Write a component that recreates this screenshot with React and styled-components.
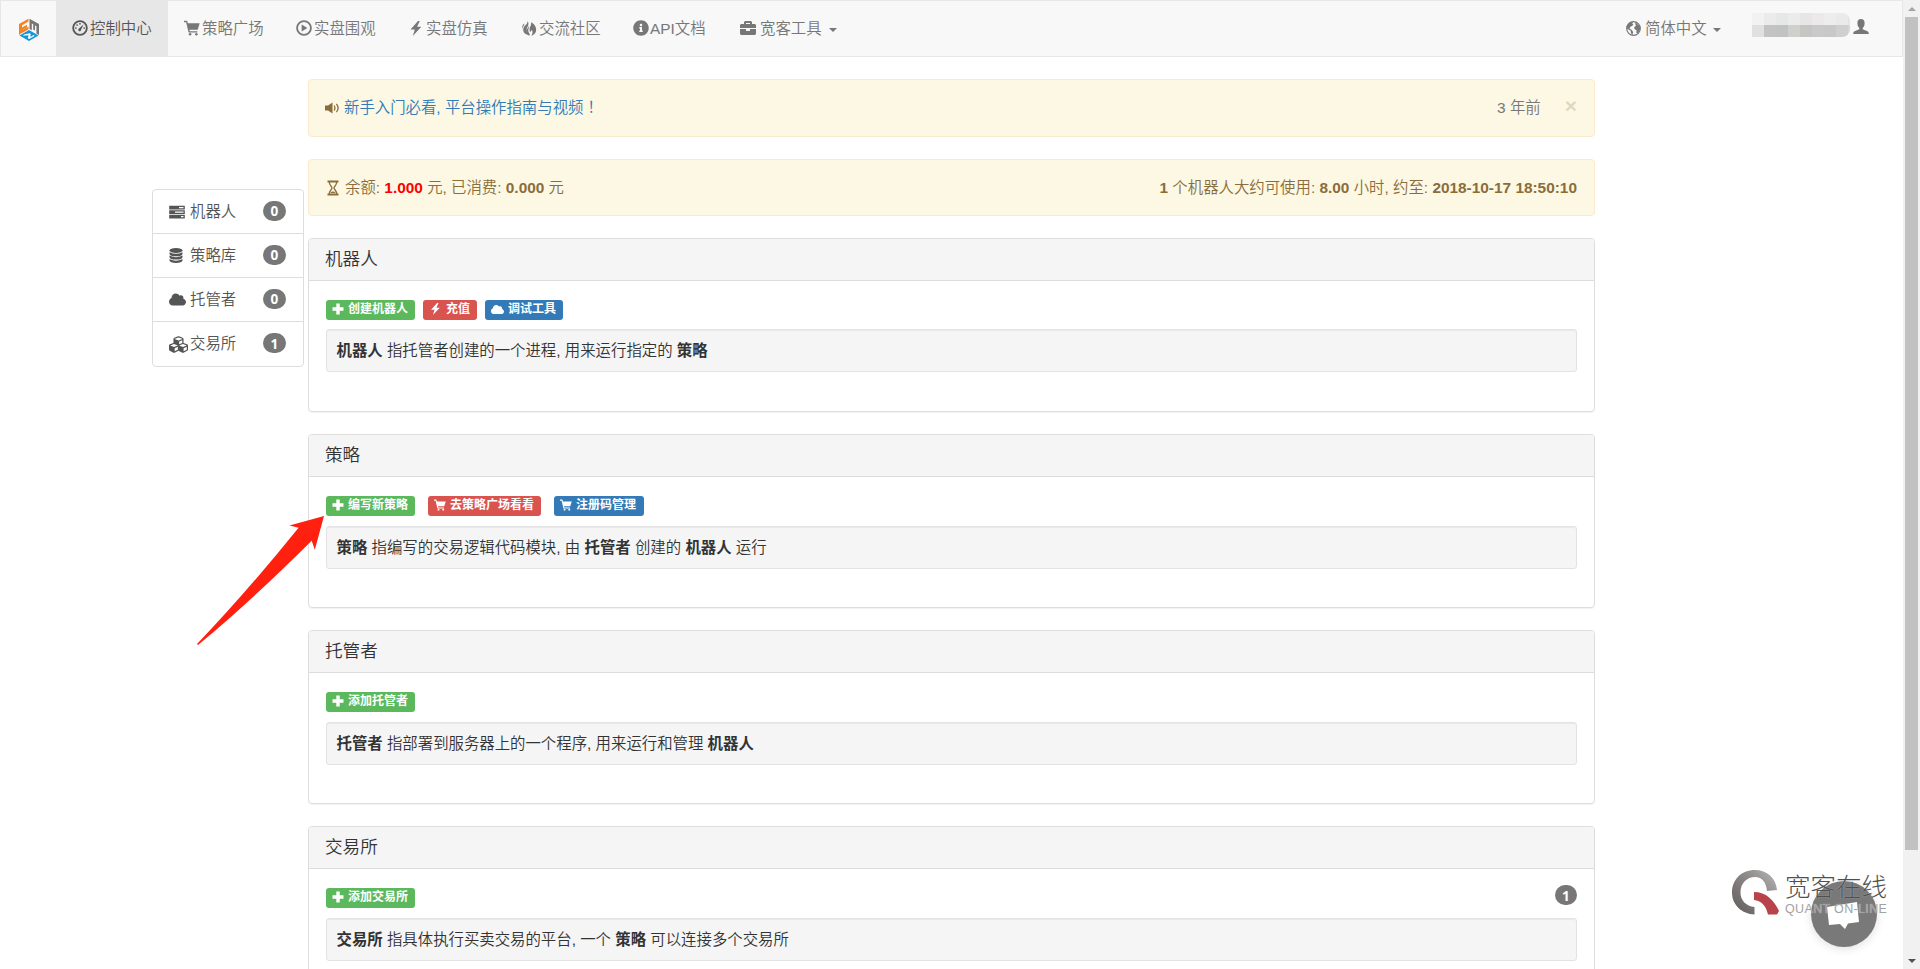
import styled, { createGlobalStyle } from 'styled-components';
import { FaInfoCircle, FaCubes, FaCloud, FaBriefcase } from 'react-icons/fa';

const GlobalStyle = createGlobalStyle`
  * { box-sizing: border-box; }

  body {
    margin: 0;
    height: 969px;
    overflow: hidden;
    background: #fff;
    color: #333;
    font-family: 'Liberation Sans', 'Noto Sans CJK SC', sans-serif;
    font-size: 15.4px;
    font-weight: 350;
    line-height: 22px;
  }

  b { font-weight: 700; }

  svg { display: block; flex: none; fill: currentColor; }
`;

const Screen = styled.div`
  display: grid;
  grid-template-columns: 1903px 17px;
  height: 969px;
  overflow: hidden;
`;

const Page = styled.div`
  height: 969px;
  overflow: hidden;
`;

const Navbar = styled.nav`
  display: flex;
  height: 57px;
  padding-right: 33px;
  background: #f8f8f8;
  border: 1px solid #e7e7e7;
`;

const Brand = styled.a`
  display: flex;
  width: 55px;
  padding: 17px 0 0 17px;
`;

const NavItem = styled.a`
  display: flex;
  align-items: center;
  gap: ${({ $gap }) => $gap || 0}px;
  width: ${({ $width }) => $width}px;
  padding: 0 0 1px 16px;
  white-space: nowrap;
  color: ${({ $active }) => ($active ? '#555' : '#777')};
  background: ${({ $active }) => ($active ? '#e7e7e7' : 'transparent')};
`;

const NavLabel = styled.span`
  padding-top: 2px;
`;

const Caret = styled.span`
  margin: 3px 0 0 ${({ $left }) => $left || 0}px;
  border-top: 4px solid currentColor;
  border-left: 4px solid transparent;
  border-right: 4px solid transparent;
`;

const NavRight = styled.div`
  display: flex;
  margin-left: auto;
  color: #777;
`;

const Account = styled.div`
  display: flex;
  gap: 3px;
  padding-top: 12px;

  svg { margin-top: 6px; }
`;

const Mosaic = styled.div`
  display: grid;
  grid-template-columns: repeat(8, 12px) 2px;
  grid-template-rows: 12px 12px;
  width: 98px;
  height: 24px;
  border-radius: 0 8px 8px 0;
  overflow: hidden;
`;

const Tile = styled.i`
  background: ${({ $tone }) => $tone};
`;

const Layout = styled.div`
  display: grid;
  grid-template-columns: 152px 1287px;
  column-gap: 4px;
  padding: 22px 0 0 152px;
`;

const SideMenu = styled.div`
  margin-top: 110px;
  height: 178px;
  border: 1px solid #ddd;
  border-radius: 4px;
`;

const SideItem = styled.a`
  display: grid;
  grid-template-columns: 21px 1fr 23px;
  align-items: center;
  height: 44px;
  padding: 0 17px 0 16px;
  color: #555;
  white-space: nowrap;

  &:first-child { height: 43px; }
  &:last-child { height: 45px; }
  & + & { border-top: 1px solid #ddd; }
`;

const Badge = styled.span`
  display: flex;
  align-items: center;
  justify-content: center;
  width: ${({ $width }) => $width || 23}px;
  height: 20px;
  margin-bottom: 2px;
  border-radius: 11px;
  background: #777;
  color: #fff;
  font-family: 'Noto Sans', sans-serif;
  font-size: 13.6px;
  font-weight: 700;
  line-height: 13px;
`;

const Main = styled.main`
  display: flex;
  flex-direction: column;
  gap: 22px;
`;

const Alert = styled.div`
  display: flex;
  align-items: center;
  height: ${({ $height }) => $height}px;
  padding: 0 17px 0 16px;
  border: 1px solid #faebcc;
  border-radius: 4px;
  background: #fcf8e3;
  color: #8a6d3b;
  white-space: pre;

  a { margin-left: 4px; color: #337ab7; }
  em { font-style: normal; color: #f00; font-weight: 700; }
`;

const Mark = styled.span`
  font-family: 'Noto Sans CJK TC', sans-serif;
  line-height: 1;
`;

const Balance = styled.span`
  margin-left: 5px;
`;

const Push = styled.span`
  margin-left: auto;
  color: ${({ $muted }) => ($muted ? '#777' : 'inherit')};
`;

const Close = styled.span`
  margin: -5px 0 0 24px;
  color: #e0dabd;
  font-size: 21px;
  font-weight: 700;
`;

const Panel = styled.section`
  height: 174px;
  border: 1px solid #ddd;
  border-radius: 4px;
  box-shadow: 0 1px 1px rgba(0, 0, 0, 0.05);
`;

const PanelHeading = styled.h3`
  margin: 0;
  height: 42px;
  padding: 9px 16px 0;
  border-bottom: 1px solid #ddd;
  border-radius: 3px 3px 0 0;
  background: #f5f5f5;
  font-size: 17.6px;
  font-weight: 350;
  line-height: 22px;
`;

const PanelBody = styled.div`
  padding: 19px 17px 0;
`;

const Actions = styled.div`
  display: flex;
  gap: ${({ $gap }) => $gap}px;
  height: 20px;
`;

const tones = { green: '#5cb85c', red: '#d9534f', blue: '#337ab7' };

const Action = styled.a`
  display: flex;
  align-items: center;
  gap: 4px;
  width: ${({ $width }) => $width}px;
  height: 20px;
  padding: 0 0 2px 6px;
  border-radius: 3px;
  background: ${({ $tone }) => tones[$tone]};
  color: #fff;
  font-size: 12px;
  font-weight: 700;
  line-height: 12px;
  white-space: nowrap;
`;

const Count = styled.div`
  margin-left: auto;
  margin-top: -3px;
`;

const Well = styled.p`
  margin: ${({ $top }) => $top || 10}px 0 0;
  height: 43px;
  padding: 10px 9.5px;
  border: 1px solid #e3e3e3;
  border-radius: 3px;
  background: #f5f5f5;
  box-shadow: inset 0 1px 1px rgba(0, 0, 0, 0.05);
  line-height: 21px;
`;

const Scrollbar = styled.div`
  display: flex;
  flex-direction: column;
  align-items: center;
  justify-content: space-between;
  height: 969px;
  padding: 7px 0 6px;
  background: #f1f1f1;
`;

const Thumb = styled.div`
  width: 13px;
  height: 833px;
  margin: 6px 0 auto;
  background: #c1c1c1;
`;

const ScrollArrow = styled.i`
  border: 4px solid transparent;
  border-top-width: ${({ $down }) => ($down ? 4 : 0)}px;
  border-bottom-width: ${({ $down }) => ($down ? 0 : 4)}px;
  border-${({ $down }) => ($down ? 'top' : 'bottom')}-color: ${({ $down }) => ($down ? '#505050' : '#a3a3a3')};
`;

const Arrow = styled.svg`
  position: absolute;
  left: 190px;
  top: 510px;
`;

const Chat = styled.div`
  position: absolute;
  left: 1811px;
  top: 881px;
  width: 66px;
  height: 66px;
  border-radius: 50%;
  background: #797979;
  box-shadow: 0 2px 10px rgba(0, 0, 0, 0.12);
`;

const Watermark = styled.div`
  position: absolute;
  left: 1731px;
  top: 869px;
  display: flex;
  gap: 5px;
`;

const WatermarkText = styled.div`
  color: #505050;
  font-size: 25.5px;
  font-weight: 300;
  line-height: 26px;
  padding-top: 5px;
  white-space: nowrap;
  text-shadow: 0 0 1px rgba(255, 255, 255, 0.6);

  small {
    display: block;
    color: #a2a2a2;
    font-size: 12.5px;
    letter-spacing: 0.35px;
    line-height: 13px;
    margin-top: 3px;
  }
`;

const Logo = () => (
  <svg width="22" height="24" viewBox="0 0 22 24">
    <path fill="#f5821f" d="M1 6 10.500 .7V3.500L4 7.200V9.500L9 6.700V9.300L4 12.200V14.800L1 17Z" />
    <path fill="#f5821f" d="M4 12.200 10.500 8.600V11.300L4 15Z" />
    <path fill="#777" d="M11.500 .7 21 6V17L18.400 15.500V8.200L17 7.500V12.500L15.200 11.500V6.300L13.800 5.500V12.200L11.500 11Z" />
    <path fill="#1296db" fillRule="evenodd" d="M11 12 20.500 17.500 11 23 1.500 17.500ZM6 16.500 5 17.700 10.500 17.300 9.800 20.300 11.300 21 16.800 17.800 15.500 17 12.200 18.900 12.800 15.800 11.500 15.300Z" />
  </svg>
);

const DashboardIcon = () => (
  <svg width="16" height="16" viewBox="0 0 15 15">
    <circle cx="7.500" cy="7.500" r="6.400" fill="none" stroke="currentColor" strokeWidth="1.700" />
    <path d="M6.300 8.300 11 4 8.500 9.200A1.300 1.300 0 1 1 6.300 8.300Z" />
    <circle cx="3.600" cy="7.500" r=".8" />
    <circle cx="4.800" cy="4.700" r=".8" />
    <circle cx="7.500" cy="3.600" r=".8" />
    <circle cx="11.400" cy="7.500" r=".8" />
  </svg>
);

const CartIcon = ({ size = 16 }) => (
  <svg width={size} height={size} viewBox="0 0 15 15">
    <path d="M0 .7H2.900L3.700 3H14.700L12.800 9.200H5L5.400 10.600H12.500V11.800H4.300L2 2.100H0Z" />
    <circle cx="5.700" cy="13.300" r="1.200" />
    <circle cx="11.600" cy="13.300" r="1.200" />
  </svg>
);

const PlayIcon = () => (
  <svg width="16" height="16" viewBox="0 0 15 15">
    <circle cx="7.500" cy="7.500" r="6.500" fill="none" stroke="currentColor" strokeWidth="1.700" />
    <path d="M5.300 4.300 10.700 7.500 5.300 10.700Z" />
  </svg>
);

const FlashIcon = ({ width = 12, height = 15 }) => (
  <svg width={width} height={height} viewBox="0 0 11 15">
    <path d="M7.500 0 0 8.500H4.300L2.300 15 10.800 5.800H6.600L9.300 0Z" />
  </svg>
);

const FireIcon = () => (
  <svg width="15" height="15" viewBox="0 0 15 15">
    <path d="M5.600 0C7.700 3.200 5.500 5.500 4.800 7.700 4.200 9.400 4.500 11 6.200 13.800 1.800 12.800.2 9.300 1.800 6.400 3 4 5.700 3.200 5.600 0Z" />
    <path d="M9.200 1C13.500 4 14.800 7.500 13.900 10.400 13 12.900 11.300 14.100 9.300 14.800 11 12.400 10.800 10.500 9.800 8.800 9.300 10.300 8.400 10.700 7.800 11.300 8 9.700 7.300 9 7.700 7.100 8 5.300 9.600 4.300 9.200 1Z" />
    <path d="M6.900 4.500C7.400 7.300 6 8.200 6.300 10 6.400 11.800 8.300 12.500 7.600 14.800 4 13.300 3.700 10.500 4.900 8.300 5.600 6.900 6.900 6.500 6.900 4.500Z" />
    <path d="M2.300 2.500C2.700 4.300.700 5.300.400 8-.100 5.500.500 3.800 2.300 2.500Z" />
  </svg>
);

const GlobeIcon = () => (
  <svg width="15" height="15" viewBox="0 0 15 15">
    <circle cx="7.500" cy="7.500" r="6.800" fill="none" stroke="currentColor" strokeWidth="1.200" />
    <path d="M7 1C3 .5 .7 4 .8 7.200L2.800 8.800 4.600 9.600 5 12 6.300 14.200 7.200 11 5.500 8.800 3.400 7.400 4.400 5.700 6.400 4.800 7.400 3.300 6.200 2.400ZM9.500 1.300 13.800 5.200 14.200 8.200 11.500 12.800 10.300 11.500 10.600 9.200 8.400 8 8.300 6 10 4.800 9.200 3Z" />
  </svg>
);

const UserIcon = () => (
  <svg width="16" height="15" viewBox="0 0 16 15">
    <path d="M8 0C5.700 0 4.400 1.600 4.400 4 4.400 6 5 8 6.300 9V10.300L1.500 12.300C.6 12.700.2 13.500.2 15H15.800C15.800 13.500 15.400 12.700 14.500 12.300L9.700 10.300V9C11 8 11.600 6 11.600 4 11.600 1.600 10.300 0 8 0Z" />
  </svg>
);

const VolumeIcon = () => (
  <svg width="15" height="12" viewBox="0 0 15 12">
    <path d="M0 3.500H3L7.500 .5V11.500L3 8.500H0Z" />
    <path fill="none" stroke="currentColor" strokeWidth="1.300" d="M9.200 3.500Q10.600 6 9.200 8.500M11.400 1.800Q14.800 6 11.400 10.200" />
  </svg>
);

const HourglassIcon = () => (
  <svg width="15" height="16" viewBox="-2 0 15 15">
    <path d="M.5 0H11.500V2H.5ZM.5 13H11.500V15H.5Z" />
    <path fill="none" stroke="currentColor" strokeWidth="1.300" d="M2.300 1.500C2.300 5 5 6 5 7.500S2.300 10 2.300 13.500M9.700 1.500C9.700 5 7 6 7 7.500S9.700 10 9.700 13.500" />
    <path d="M3.500 12.500C4.500 10.500 7.500 10.500 8.500 12.500Z" />
  </svg>
);

const TasksIcon = () => (
  <svg width="16" height="14" viewBox="0 0 16 14">
    <path fillRule="evenodd" d="M.2 .8H15.800V4.500H.2ZM10 2V3.300H14.500V2ZM.2 5.300H15.800V9H.2ZM6 6.500V7.800H14.500V6.500ZM.2 9.800H15.800V13.500H.2ZM12 11V12.300H14.500V11Z" />
  </svg>
);

const DatabaseIcon = () => (
  <svg width="14" height="15" viewBox="0 0 14 15">
    <ellipse cx="7" cy="2.500" rx="6.500" ry="2.500" />
    <path d="M.5 4.200Q7 7.500 13.500 4.200V6Q13 8.300 7 8.300T.5 6ZM.5 7.600Q7 10.900 13.500 7.600V9.300Q13 11.600 7 11.600T.5 9.300ZM.5 11Q7 14.300 13.500 11V12.600Q13 15 7 15T.5 12.600Z" />
  </svg>
);

const PlusIcon = () => (
  <svg width="12" height="12" viewBox="0 0 12 12">
    <path d="M4.300 .5H7.700V4.300H11.500V7.700H7.700V11.500H4.300V7.700H.5V4.300H4.300Z" />
  </svg>
);

const mosaic = [
  '#f2f2f2', '#eaebea', '#e6e8e7', '#eaebea', '#e6e6e6', '#ebe9ea', '#eeedee', '#eaeaea', '#e4e4e0',
  '#e0e0e0', '#c4c3c4', '#c3c2c3', '#cfcfcb', '#c4c6c5', '#cac9ca', '#cac7c9', '#cfcfd1', '#d6d6d2',
];

const panels = [
  {
    title: '机器人',
    gap: 8,
    wellTop: 9,
    actions: [
      { tone: 'green', width: 89, icon: <PlusIcon />, text: '创建机器人' },
      { tone: 'red', width: 54, icon: <FlashIcon width={13} height={12} />, text: '充值' },
      { tone: 'blue', width: 78, icon: <FaCloud size={13} />, text: '调试工具' },
    ],
    note: <><b>机器人</b> 指托管者创建的一个进程, 用来运行指定的 <b>策略</b></>,
  },
  {
    title: '策略',
    gap: 13,
    actions: [
      { tone: 'green', width: 89, icon: <PlusIcon />, text: '编写新策略' },
      { tone: 'red', width: 113, icon: <CartIcon size={12} />, text: '去策略广场看看' },
      { tone: 'blue', width: 90, icon: <CartIcon size={12} />, text: '注册码管理' },
    ],
    note: <><b>策略</b> 指编写的交易逻辑代码模块, 由 <b>托管者</b> 创建的 <b>机器人</b> 运行</>,
  },
  {
    title: '托管者',
    gap: 8,
    actions: [{ tone: 'green', width: 89, icon: <PlusIcon />, text: '添加托管者' }],
    note: <><b>托管者</b> 指部署到服务器上的一个程序, 用来运行和管理 <b>机器人</b></>,
  },
  {
    title: '交易所',
    gap: 8,
    count: 1,
    actions: [{ tone: 'green', width: 89, icon: <PlusIcon />, text: '添加交易所' }],
    note: <><b>交易所</b> 指具体执行买卖交易的平台, 一个 <b>策略</b> 可以连接多个交易所</>,
  },
];

const navItems = [
  { icon: <DashboardIcon />, text: '控制中心', width: 112, gap: 2, active: true },
  { icon: <CartIcon />, text: '策略广场', width: 112, gap: 2 },
  { icon: <PlayIcon />, text: '实盘围观', width: 114, gap: 2 },
  { icon: <FlashIcon />, text: '实盘仿真', width: 112, gap: 4 },
  { icon: <FireIcon />, text: '交流社区', width: 111, gap: 2 },
  { icon: <FaInfoCircle size={16} />, text: 'API文档', width: 107, gap: 1 },
  { icon: <FaBriefcase size={16} />, text: '宽客工具', width: 130, gap: 4, caret: 3 },
];

const sideItems = [
  { icon: <TasksIcon />, text: '机器人', count: 0 },
  { icon: <DatabaseIcon />, text: '策略库', count: 0 },
  { icon: <FaCloud size={17} />, text: '托管者', count: 0 },
  { icon: <FaCubes size={19} />, text: '交易所', count: 1 },
];

const App = () => (
  <>
    <GlobalStyle />
    <Screen>
      <Page>
        <Navbar>
          <Brand><Logo /></Brand>
          {navItems.map(({ icon, text, width, gap, active, caret }) => (
            <NavItem key={text} $width={width} $gap={gap} $active={active}>
              {icon}
              <NavLabel>{text}</NavLabel>
              {caret && <Caret $left={caret} />}
            </NavItem>
          ))}
          <NavRight>
            <NavItem $width={142} $gap={4}><GlobeIcon /><NavLabel>简体中文</NavLabel><Caret $left={2} /></NavItem>
            <Account>
              <Mosaic>
                {mosaic.map((tone, i) => <Tile key={i} $tone={tone} />)}
              </Mosaic>
              <UserIcon />
            </Account>
          </NavRight>
        </Navbar>
        <Layout>
          <SideMenu>
            {sideItems.map(({ icon, text, count }) => (
              <SideItem key={text}>{icon}<span>{text}</span><Badge>{count}</Badge></SideItem>
            ))}
          </SideMenu>
          <Main>
            <Alert $height={58}>
              <VolumeIcon />
              <a>新手入门必看, 平台操作指南与视频<Mark>！</Mark></a>
              <Push $muted>3 年前</Push>
              <Close>×</Close>
            </Alert>
            <Alert $height={57}>
              <HourglassIcon />
              <Balance>余额: <em>1.000</em> 元, 已消费: <b>0.000</b> 元</Balance>
              <Push><b>1</b> 个机器人大约可使用: <b>8.00</b> 小时, 约至: <b>2018-10-17 18:50:10</b></Push>
            </Alert>
            {panels.map(({ title, gap, wellTop, actions, note, count }) => (
              <Panel key={title}>
                <PanelHeading>{title}</PanelHeading>
                <PanelBody>
                  <Actions $gap={gap}>
                    {actions.map(({ tone, width, icon, text }) => (
                      <Action key={text} $tone={tone} $width={width}>{icon}{text}</Action>
                    ))}
                    {count && <Count><Badge $width={22}>{count}</Badge></Count>}
                  </Actions>
                  <Well $top={wellTop}>{note}</Well>
                </PanelBody>
              </Panel>
            ))}
          </Main>
        </Layout>
      </Page>
      <Scrollbar>
        <ScrollArrow />
        <Thumb />
        <ScrollArrow $down />
      </Scrollbar>
    </Screen>
    <Arrow width="140" height="140" viewBox="0 0 140 140">
      <path fill="#ff2010" d="M134 6 99.500 15.500 108.600 17.700Q55 84 7 134L8 135Q60 92 121.700 30.700L124.800 39.700Z" />
    </Arrow>
    <Chat>
      <svg width="66" height="66" viewBox="0 0 66 66">
        <path fill="#fff" d="M16 26 46 21 48 41 37 42.500 34 48 29 43 18 44Z" />
      </svg>
    </Chat>
    <Watermark>
      <svg width="49" height="46" viewBox="0 0 49 46">
        <defs>
          <linearGradient id="ring" x1="0" y1="1" x2="1" y2="0">
            <stop offset="0" stopColor="#5f5a59" />
            <stop offset="0.6" stopColor="#8d8a89" />
            <stop offset="1" stopColor="#b9b9b9" />
          </linearGradient>
        </defs>
        <path fill="url(#ring)" d="M46 21C45 9 36 1 24 1 10 1 1 11 1 23.500 1 36 11 45 23.500 45.500V38C15 37 9.500 31.500 9.500 23.500 9.500 14 16 8 24 8 31 8 35 13 36 22Z" />
        <path fill="#b8434a" d="M23 23C35 23 43 31 48 42L46 45.500H37C35 37 31 32 23 31Z" />
      </svg>
      <WatermarkText>宽客在线<small>QUANT ON-LINE</small></WatermarkText>
    </Watermark>
  </>
);

export default App;
